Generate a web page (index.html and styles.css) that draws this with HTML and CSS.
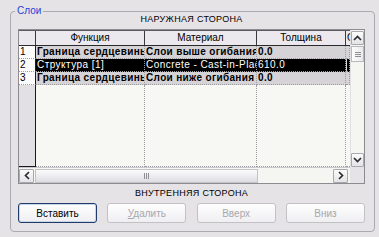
FILE: index.html
```html
<!DOCTYPE html>
<html lang="ru">
<head>
<meta charset="utf-8">
<link rel="stylesheet" href="styles.css">
</head>
<body>
<fieldset class="group">
  <legend class="group-title">Слои</legend>
  <div class="side side-top">НАРУЖНАЯ СТОРОНА</div>
  <div class="grid">
    <div class="sheet">
      <div class="row head">
        <div class="c num"></div>
        <div class="c fn">Функция</div>
        <div class="c mat">Материал</div>
        <div class="c th">Толщина</div>
        <div class="c ex">Об</div>
      </div>
      <div class="row data bold">
        <div class="c num">1</div>
        <div class="c fn">Граница сердцевины</div>
        <div class="c mat">Слои выше огибания</div>
        <div class="c th">0.0</div>
        <div class="c ex"></div>
      </div>
      <div class="row data selected">
        <div class="c num">2</div>
        <div class="c fn">Структура [1]</div>
        <div class="c mat">Concrete - Cast-in-Place</div>
        <div class="c th">610.0</div>
        <div class="c ex"></div>
      </div>
      <div class="row data bold">
        <div class="c num">3</div>
        <div class="c fn">Граница сердцевины</div>
        <div class="c mat">Слои ниже огибания</div>
        <div class="c th">0.0</div>
        <div class="c ex"></div>
      </div>
      <div class="row filler">
        <div class="c num"></div>
        <div class="c fn"></div>
        <div class="c mat"></div>
        <div class="c th"></div>
        <div class="c ex"></div>
      </div>
    </div>
    <div class="vscroll">
      <div class="sbtn">
        <svg width="9" height="6" viewBox="0 0 9 6"><path d="M1 5 L4.5 1.5 L8 5" stroke="#2c2c30" stroke-width="1.7" fill="none"/></svg>
      </div>
      <div class="vthumb">
        <span class="grip-h"></span><span class="grip-h"></span><span class="grip-h"></span>
      </div>
      <div class="vtrack"></div>
      <div class="sbtn">
        <svg width="9" height="6" viewBox="0 0 9 6"><path d="M1 1 L4.5 4.5 L8 1" stroke="#2c2c30" stroke-width="1.7" fill="none"/></svg>
      </div>
    </div>
    <div class="hscroll">
      <div class="sbtn hbtn">
        <svg width="6" height="9" viewBox="0 0 6 9"><path d="M5 1 L1.5 4.5 L5 8" stroke="#2c2c30" stroke-width="1.7" fill="none"/></svg>
      </div>
      <div class="hthumb">
        <span class="grip-v"></span><span class="grip-v"></span><span class="grip-v"></span>
      </div>
      <div class="htrack"></div>
      <div class="sbtn hbtn">
        <svg width="6" height="9" viewBox="0 0 6 9"><path d="M1 1 L4.5 4.5 L1 8" stroke="#2c2c30" stroke-width="1.7" fill="none"/></svg>
      </div>
    </div>
    <div class="corner"></div>
  </div>
  <div class="side side-bottom">ВНУТРЕННЯЯ СТОРОНА</div>
  <div class="buttons">
    <button class="btn default">Вставить</button>
    <button class="btn" disabled><u>У</u>далить</button>
    <button class="btn" disabled>Вверх</button>
    <button class="btn" disabled>Вниз</button>
  </div>
</fieldset>
</body>
</html>
```

FILE: styles.css
```css
* {
  box-sizing: border-box;
}

html,
body {
  margin: 0;
  padding: 0;
}

body {
  width: 379px;
  height: 237px;
  overflow: hidden;
  background: #e6e3e7;
  color: #000;
  font-family: "Liberation Sans", Arial, sans-serif;
  font-size: 10px;
  line-height: 12px;
}

.group {
  margin: 5px 4px 0 10px;
  padding: 0 9px 0 7px;
  height: 227px;
  min-width: 0;
  border: 1px solid #adaaaf;
  border-radius: 4px;
}

.group-title {
  margin-left: -3px;
  padding: 0 2px;
  color: #1c3ed6;
  font-size: 10px;
  line-height: 12px;
}

.side {
  height: 12px;
  font-size: 9px;
  text-align: center;
  letter-spacing: 0.3px;
  white-space: nowrap;
}

.side-top {
  margin-top: -4px;
}

.side-bottom {
  margin-top: 3px;
}

/* grid */
.grid {
  margin-top: 4px;
  height: 155px;
  border: 1px solid #8d8b90;
  display: grid;
  grid-template-columns: 1fr 14px;
  grid-template-rows: 1fr 16px;
  background: #f7f7f4;
}

.sheet {
  display: flex;
  flex-direction: column;
  overflow: hidden;
}

.row {
  display: flex;
  flex: none;
}

.c {
  flex: none;
  overflow: hidden;
  white-space: nowrap;
  padding-left: 1px;
}

.num { width: 17px; }
.fn { width: 109px; }
.mat { width: 112px; }
.th { width: 89px; }
.ex { flex: 1; width: auto; }

.head {
  height: 16px;
  background: #ebe9ed;
  border-top: 1px solid #5c5b60;
  border-bottom: 1px solid #2a2a2c;
}

.head .c {
  text-align: center;
  line-height: 14px;
  border-right: 1px solid #3a3a3c;
  padding-left: 0;
}

.head .ex {
  text-align: left;
  border-right: none;
  padding-left: 1px;
}

.data {
  height: 13px;
  background: #d6d3d7;
}

.data .c {
  line-height: 12px;
  letter-spacing: 0.45px;
  border-right: 1px dotted #9c9ba0;
  border-bottom: 1px dotted #9c9ba0;
}

.bold .c {
  font-weight: bold;
  letter-spacing: 0.35px;
}

.data .c.num {
  background: #fcfcfc;
  color: #000;
  font-weight: normal;
  letter-spacing: 0;
  border-right: 1px solid #1a1a1a;
}

.selected {
  background: #000;
  color: #fff;
}

.selected .ex {
  border-left: 1px solid #d8d8d8;
}

.filler {
  flex: 1;
}

.filler .c {
  border-right: 1px dotted #9c9ba0;
  border-bottom: 1px dotted #9c9ba0;
}

.filler .num {
  background: #e3e0e4;
  border-right: 1px solid #1a1a1a;
  border-bottom: 1px solid #1a1a1a;
}

.filler .ex {
  border-right: none;
}

/* scrollbars */
.vscroll {
  display: flex;
  flex-direction: column;
  background: #f5f5f2;
  border-left: 1px solid #e0dfe2;
  padding: 1px 0 0 0;
}

.sbtn {
  flex: none;
  height: 14px;
  border: 1px solid #a9a8ad;
  border-radius: 1px;
  background: linear-gradient(#fbfbfb, #e4e3e7);
  display: flex;
  align-items: center;
  justify-content: center;
}

.vthumb {
  flex: none;
  height: 16px;
  margin-top: 1px;
  border: 1px solid #b9b8bd;
  background: linear-gradient(90deg, #fdfdfd, #e9e8ec);
  display: flex;
  flex-direction: column;
  align-items: center;
  justify-content: center;
  gap: 1px;
}

.grip-h {
  width: 6px;
  height: 1px;
  background: #8f8e94;
}

.vtrack {
  flex: 1;
}

.hscroll {
  display: flex;
  align-items: center;
  background: #f5f5f2;
  border-top: 1px solid #c9c8cc;
  padding: 0 2px 0 0;
}

.hbtn {
  width: 15px;
  height: 14px;
}

.hthumb {
  flex: none;
  width: 223px;
  height: 14px;
  margin-left: 1px;
  border: 1px solid #c4c3c8;
  background: linear-gradient(#fbfbfb, #dedde2);
  display: flex;
  align-items: center;
  justify-content: center;
  gap: 1px;
}

.grip-v {
  width: 1px;
  height: 6px;
  background: #8f8e94;
}

.htrack {
  flex: 1;
}

.corner {
  background: #e6e3e7;
}

/* buttons */
.buttons {
  margin-top: 4px;
  display: flex;
  justify-content: space-between;
}

.btn {
  width: 79px;
  height: 20px;
  padding: 0;
  border: 1px solid #a7a5ab;
  border-radius: 3px;
  background: linear-gradient(#fefefe, #efeef1);
  font-family: "Liberation Sans", Arial, sans-serif;
  font-size: 10px;
  color: #000;
}

.btn.default {
  border-color: #1f3b6a;
  box-shadow: inset 0 0 0 1px #c8d4e8;
}

.btn:disabled {
  color: #a8a6ac;
  border-color: #c3c1c6;
}

.btn u {
  text-decoration-thickness: 1px;
}
```
